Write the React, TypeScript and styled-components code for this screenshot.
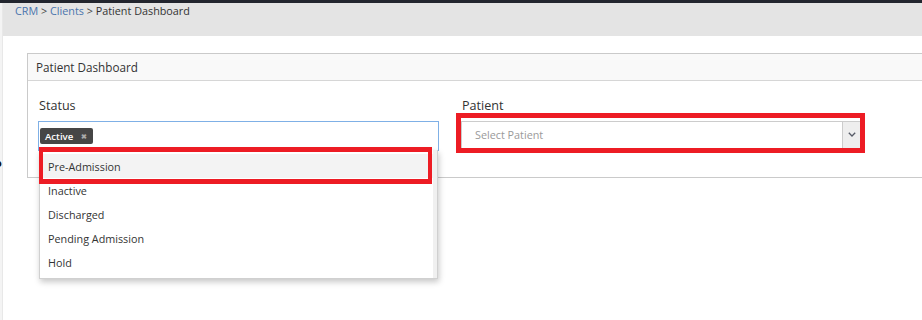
import React from "react";
import styled, { createGlobalStyle } from "styled-components";

const Global = createGlobalStyle`
  html, body { margin: 0; padding: 0; background: #fff; }
  body { width: 922px; height: 320px; overflow: hidden; font-family: "Open Sans", "Liberation Sans", sans-serif; color: #333; }
  * { box-sizing: border-box; }
`;

const Page = styled.div`
  width: 922px;
  height: 320px;
  display: flex;
  flex-direction: column;
  overflow: hidden;
`;

const TopBar = styled.div`
  height: 3px;
  background: #22252e;
  flex: none;
`;

const Shell = styled.div`
  flex: 1;
  display: flex;
  min-height: 0;
`;

const SideRail = styled.div`
  width: 3px;
  flex: none;
  background: #f4f4f4;
  border-right: 1px solid #e8e8e8;
  overflow: hidden;
  padding-top: 153px;
`;

const RailGlyph = styled.span`
  display: block;
  margin-left: -5px;
  font-size: 11px;
  font-weight: 700;
  line-height: 14px;
  color: #111;
`;

const Main = styled.div`
  flex: 1;
  min-width: 0;
  overflow: hidden;
`;

const Crumbs = styled.div`
  height: 33px;
  background: #e4e4e4;
  padding: 0 0 0 12px;
  font-size: 10.8px;
  line-height: 15px;
  color: #333;
`;

const CrumbLink = styled.a`
  color: #4a74ad;
  text-decoration: none;
`;

const Sep = styled.span`
  color: #444;
`;

const Content = styled.div`
  padding: 17px 0 0 24px;
`;

const Panel = styled.div`
  width: 960px;
  border: 1px solid #cacaca;
  background: #fff;
`;

const PanelHead = styled.div`
  height: 27px;
  line-height: 26px;
  padding-left: 8px;
  background: #f9f9f9;
  border-bottom: 1px solid #d6d6d6;
  font-size: 11.7px;
  color: #333;
`;

const PanelBody = styled.div`
  display: grid;
  grid-template-columns: 401px 399px;
  column-gap: 22px;
  padding: 14px 0 24px 10px;
`;

const Field = styled.div`
  display: flex;
  flex-direction: column;
  position: relative;
`;

const Label = styled.div<{ $gap: number }>`
  height: 18px;
  font-size: 12.6px;
  line-height: 14px;
  padding: 4px 0 0 1px;
  color: #333;
  margin-bottom: ${(p) => p.$gap}px;
`;

const MultiBox = styled.div`
  height: 30px;
  border: 1px solid #7fb0e6;
  background: #fff;
  display: flex;
  align-items: center;
  padding-left: 1px;
  position: relative;
`;

const Tag = styled.span`
  display: inline-flex;
  align-items: center;
  height: 16px;
  padding: 0 6px 0 5px;
  background: #464646;
  border-radius: 2px;
  color: #fff;
  font-size: 9.6px;
  font-weight: 600;
  gap: 8px;
`;

const TagClose = styled.span`
  color: #a8a8a8;
  font-size: 7px;
  line-height: 1;
`;

const Dropdown = styled.div`
  position: absolute;
  top: 100%;
  left: 0;
  width: 399px;
  display: flex;
  background: #fff;
  border: 1px solid #d0d0d0;
  border-top: none;
  box-shadow: 1px 3px 6px rgba(0, 0, 0, 0.22);
  z-index: 5;
`;

const Options = styled.div`
  flex: 1;
  padding: 4px 0 4px 0;
`;

const ScrollTrack = styled.div`
  width: 4px;
  background: #f0f0f0;
`;

const Option = styled.div<{ $active?: boolean }>`
  position: relative;
  height: 24px;
  line-height: 22px;
  padding: 2px 0 0 8px;
  font-size: 10.8px;
  color: #333;
  background: ${(p) => (p.$active ? "#f3f3f3" : "transparent")};
`;

const OptionMark = styled.span`
  position: absolute;
  top: -7px;
  bottom: -6px;
  left: -1px;
  right: 1px;
  border: solid #ed1c24;
  border-width: 5px 4px;
  pointer-events: none;
`;

const Highlight = styled.div`
  border: 5px solid #ed1c24;
  margin: 0 -5px;
  padding-top: 3px;
`;

const SelectBox = styled.div`
  height: 27px;
  border: 1px solid #cccccc;
  border-bottom: none;
  border-right: none;
  display: flex;
  background: #fff;
`;

const Placeholder = styled.div`
  flex: 1;
  padding: 0 0 2px 13px;
  display: flex;
  align-items: center;
  font-size: 10.8px;
  color: #9a9a9a;
`;

const ArrowBtn = styled.div`
  width: 18px;
  background: #eeeeee;
  border-left: 1px solid #cccccc;
  display: flex;
  align-items: center;
  justify-content: center;
  padding-bottom: 1px;
`;

const statusOptions = ["Pre-Admission", "Inactive", "Discharged", "Pending Admission", "Hold"];

export default function App() {
  return (
    <Page>
      <Global />
      <TopBar />
      <Shell>
        <SideRail>
          <RailGlyph>o</RailGlyph>
        </SideRail>
        <Main>
          <Crumbs>
            <CrumbLink>CRM</CrumbLink> <Sep>&gt;</Sep> <CrumbLink>Clients</CrumbLink> <Sep>&gt;</Sep> Patient Dashboard
          </Crumbs>
          <Content>
            <Panel>
              <PanelHead>Patient Dashboard</PanelHead>
              <PanelBody>
                <Field>
                  <Label $gap={8}>Status</Label>
                  <MultiBox>
                    <Tag>
                      Active<TagClose>✖</TagClose>
                    </Tag>
                    <Dropdown>
                      <Options>
                        {statusOptions.map((o, i) => (
                          <Option key={o} $active={i === 0}>
                            {o}
                            {i === 0 && <OptionMark />}
                          </Option>
                        ))}
                      </Options>
                      <ScrollTrack />
                    </Dropdown>
                  </MultiBox>
                </Field>
                <Field>
                  <Label $gap={0}>Patient</Label>
                  <Highlight>
                    <SelectBox>
                      <Placeholder>Select Patient</Placeholder>
                      <ArrowBtn>
                        <svg width="8" height="5" viewBox="0 0 8 5">
                          <polyline points="0.8,0.8 4,4 7.2,0.8" fill="none" stroke="#555a66" strokeWidth="1.3" />
                        </svg>
                      </ArrowBtn>
                    </SelectBox>
                  </Highlight>
                </Field>
              </PanelBody>
            </Panel>
          </Content>
        </Main>
      </Shell>
    </Page>
  );
}
